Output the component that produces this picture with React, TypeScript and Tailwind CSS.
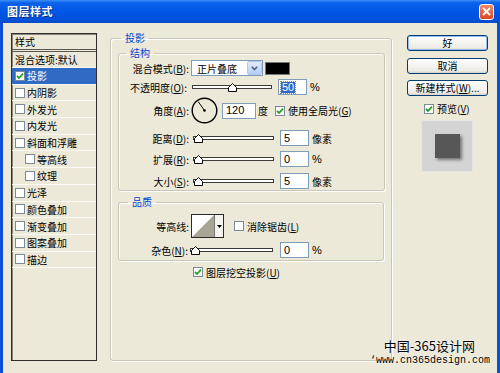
import React from "react"

const cjk = "font-['Noto_Sans_CJK_SC','Noto_Sans',sans-serif]"

function Check({ checked, className = "" }: { checked?: boolean; className?: string }) {
  return (
    <span
      className={`inline-flex w-[10px] h-[10px] shrink-0 items-center justify-center border border-[#7a8a99] bg-white ${className}`}
    >
      {checked && (
        <svg width="8" height="8" viewBox="0 0 8 8">
          <path d="M1 3.8 L3 6 L7 1.6" stroke="#21a121" strokeWidth="1.8" fill="none" />
        </svg>
      )}
    </span>
  )
}

function Slider({ width, thumb }: { width: number; thumb: number }) {
  return (
    <svg width={width} height="14" className="shrink-0">
      <rect x="0.5" y="5.5" width={width - 1} height="3" fill="#fff" stroke="#3a3a3a" />
      <path
        d={`M${thumb + 0.5} 3.5 L${thumb + 4.5} 7.5 L${thumb + 4.5} 11.5 L${thumb - 3.5} 11.5 L${thumb - 3.5} 7.5 Z`}
        fill="#fff"
        stroke="#000"
      />
    </svg>
  )
}

function Field({ value, w = 29, selected }: { value: string; w?: number; selected?: boolean }) {
  return (
    <div
      className="h-[16px] shrink-0 bg-white border border-[#7f9db9] flex items-center pl-[2px] text-[11px] font-['Liberation_Sans',sans-serif] leading-none"
      style={{ width: w }}
    >
      {selected ? (
        <span className="bg-[#316ac5] text-white px-[1px] outline-1 outline-dotted outline-[#888]">{value}</span>
      ) : (
        <span className="pl-[1px]">{value}</span>
      )}
    </div>
  )
}

function Label({ children, w = 72 }: { children: React.ReactNode; w?: number }) {
  return (
    <div className="shrink-0 text-right pr-[2px]" style={{ width: w }}>
      {children}
    </div>
  )
}

function Dial() {
  return (
    <svg width="27" height="27" viewBox="0 0 27 27" className="shrink-0">
      <circle cx="13.5" cy="13.5" r="12.3" fill="none" stroke="#000" strokeWidth="1.4" />
      <line x1="13.5" y1="13.5" x2="7.2" y2="4.6" stroke="#000" strokeWidth="1" />
      <circle cx="13.5" cy="13.5" r="1.3" fill="#000" />
    </svg>
  )
}

function Btn({ children, primary }: { children: React.ReactNode; primary?: boolean }) {
  return (
    <div
      className={`h-[16px] w-[81px] rounded-[3px] border border-[#003c74] bg-[linear-gradient(to_bottom,#ffffff,#ecebe6_85%,#d6d0c5)] flex items-center justify-center text-[10px] leading-none ${
        primary ? "shadow-[inset_0_0_0_1px_#9bbcf2]" : ""
      }`}
    >
      {children}
    </div>
  )
}

const items: { label: string; checked?: boolean; selected?: boolean; sub?: boolean }[] = [
  { label: "投影", checked: true, selected: true },
  { label: "内阴影" },
  { label: "外发光" },
  { label: "内发光" },
  { label: "斜面和浮雕" },
  { label: "等高线", sub: true },
  { label: "纹理", sub: true },
  { label: "光泽" },
  { label: "颜色叠加" },
  { label: "渐变叠加" },
  { label: "图案叠加" },
  { label: "描边" },
]

const groupBox =
  "border border-[#c9c6b6] rounded-[3px] shadow-[1px_1px_0_#fff,inset_1px_1px_0_#fff]"

export default function App() {
  return (
    <div className={`w-[500px] h-[373px] bg-[#ece9d8] flex flex-col overflow-hidden relative text-[10px] text-black ${cjk}`}>
      {/* title bar */}
      <div className="h-[23px] shrink-0 flex items-center justify-between pl-[7px] pr-[6px] bg-[linear-gradient(to_bottom,#3d8ff7_0%,#0a62ea_12%,#0055e5_55%,#0450d8_90%,#0a49c0_100%)]">
        <span className="text-white font-bold text-[11px] tracking-[0.5px] [text-shadow:1px_1px_0_#0a2f8a]">图层样式</span>
        <div className="w-[15px] h-[16px] rounded-[3px] border border-white bg-[linear-gradient(to_bottom,#f08a6a,#d9481f)] flex items-center justify-center">
          <svg width="9" height="9" viewBox="0 0 9 9">
            <path d="M1 1 L8 8 M8 1 L1 8" stroke="#fff" strokeWidth="1.8" />
          </svg>
        </div>
      </div>

      {/* body */}
      <div className="flex-1 flex items-start border-x-[3px] border-[#0b4fd6] pl-[8px] pt-[8px]">
        {/* style list */}
        <div className="w-[86px] h-[328px] mt-[2px] shrink-0 border border-[#2e2e2e] shadow-[inset_1px_1px_0_#8a887c]">
          <div className="h-[18px] flex items-center pl-[3px] border-b-[3px] border-double border-[#5a5850]">样式</div>
          <div className="h-[16px] flex items-center pl-[3px] border-b border-[#fbfaf4]">混合选项:默认</div>
          {items.map((it) => (
            <div
              key={it.label}
              className={`h-[16.7px] flex items-center gap-[2px] border-b border-[#fbfaf4] ${
                it.sub ? "pl-[13px]" : "pl-[3px]"
              } ${it.selected ? "bg-[#316ac5] text-white" : ""}`}
            >
              <Check checked={it.checked} />
              <span>{it.label}</span>
            </div>
          ))}
        </div>

        {/* settings */}
        <fieldset className={`ml-[13px] w-[282px] h-[330px] shrink-0 pl-[7px] pr-[6px] ${groupBox}`}>
          <legend className="ml-[3px] px-[4px] h-[14px] leading-[14px] text-[#0046d5]">投影</legend>

          <fieldset className={`mt-[1px] h-[145px] ${groupBox}`}>
            <legend className="ml-[7px] px-[4px] h-[14px] leading-[14px] text-[#0046d5]">结构</legend>

            <div className="flex items-center h-[16px]">
              <Label>
                混合模式(<u>B</u>):
              </Label>
              <div className="w-[72px] h-[16px] bg-white border border-[#7f9db9] flex items-center justify-between pl-[5px]">
                <span>正片叠底</span>
                <div className="w-[15px] h-[14px] rounded-[2px] bg-[linear-gradient(to_bottom,#e2ebfd,#b7cdf8)] border border-[#b1c7f2] flex items-center justify-center">
                  <svg width="7" height="5" viewBox="0 0 7 5">
                    <path d="M0.8 0.8 L3.5 3.6 L6.2 0.8" stroke="#4d6185" strokeWidth="1.6" fill="none" />
                  </svg>
                </div>
              </div>
              <div className="ml-[2px] w-[25px] h-[13px] bg-black border border-[#777]" />
            </div>

            <div className="flex items-center h-[16px] mt-[3px]">
              <Label w={70}>
                不透明度(<u>O</u>):
              </Label>
              <div className="ml-[3px]">
                <Slider width={80} thumb={40} />
              </div>
              <div className="ml-[6px]">
                <Field value="50" selected />
              </div>
              <span className="ml-[3px] font-['Liberation_Sans',sans-serif] text-[11px]">%</span>
            </div>

            <div className="flex items-center h-[27px] mt-[2px]">
              <Label>
                角度(<u>A</u>):
              </Label>
              <Dial />
              <div className="ml-[4px]">
                <Field value="120" w={34} />
              </div>
              <span className="ml-[2px]">度</span>
              <Check checked className="ml-[7px]" />
              <span className="ml-[3px]">
                使用全局光(<u>G</u>)
              </span>
            </div>

            {[
              { l: "距离", k: "D", v: "5", u: "像素", mt: "mt-[6px]" },
              { l: "扩展", k: "R", v: "0", u: "%", mt: "mt-[5px]" },
              { l: "大小", k: "S", v: "5", u: "像素", mt: "mt-[6px]" },
            ].map((r) => (
              <div key={r.l} className={`flex items-center h-[16px] ${r.mt}`}>
                <Label>
                  {r.l}(<u>{r.k}</u>):
                </Label>
                <div className="ml-[2px]">
                  <Slider width={81} thumb={5} />
                </div>
                <div className="ml-[6px]">
                  <Field value={r.v} />
                </div>
                <span className={`ml-[3px] ${r.u === "%" ? "font-['Liberation_Sans',sans-serif] text-[11px]" : ""}`}>{r.u}</span>
              </div>
            ))}
          </fieldset>

          <fieldset className={`mt-[4px] h-[66px] w-[266px] ${groupBox}`}>
            <legend className="ml-[9px] px-[4px] h-[14px] leading-[14px] text-[#0046d5]">品质</legend>

            <div className="flex items-center h-[24px] mt-[5px]">
              <Label>等高线:</Label>
              <div className="flex h-[24px] border border-[#2a2a2a]">
                <svg width="22" height="22" viewBox="0 0 22 22" className="bg-white">
                  <path d="M0 22 L22 0 L22 22 Z" fill="#a9a596" />
                </svg>
                <div className="w-[9px] border-l border-[#777] bg-[#f4f3ee] flex items-center justify-center">
                  <svg width="5" height="3" viewBox="0 0 5 3">
                    <path d="M0 0 H5 L2.5 3 Z" fill="#000" />
                  </svg>
                </div>
              </div>
              <Check className="ml-[10px]" />
              <span className="ml-[3px]">
                消除锯齿(<u>L</u>)
              </span>
            </div>

            <div className="flex items-center h-[16px] mt-[4px]">
              <Label w={71}>
                杂色(<u>N</u>):
              </Label>
              <Slider width={83} thumb={5} />
              <div className="ml-[7px]">
                <Field value="0" />
              </div>
              <span className="ml-[3px] font-['Liberation_Sans',sans-serif] text-[11px]">%</span>
            </div>
          </fieldset>

          <div className="flex items-center h-[12px] mt-[5px] pl-[75px]">
            <Check checked />
            <span className="ml-[3px]">
              图层挖空投影(<u>U</u>)
            </span>
          </div>
        </fieldset>

        {/* right column */}
        <div className="ml-[15px] mt-[4px] w-[81px] shrink-0 flex flex-col">
          <Btn primary>好</Btn>
          <div className="mt-[7px]">
            <Btn>取消</Btn>
          </div>
          <div className="mt-[6px]">
            <Btn>
              新建样式(<u>W</u>)...
            </Btn>
          </div>
          <div className="mt-[6px] h-[13px] flex items-center pl-[17px]">
            <Check checked />
            <span className="ml-[3px]">
              预览(<u>V</u>)
            </span>
          </div>
          <div className="mt-[5px] ml-[14px] w-[52px] h-[52px] bg-[#d4d4d4] border border-[#e4e4e4] flex items-center justify-center">
            <div className="w-[25px] h-[24px] bg-[#575757] shadow-[2px_2px_3px_rgba(0,0,0,0.45)]" />
          </div>
        </div>
      </div>

      {/* watermark */}
      <div className="absolute right-[10px] bottom-[7px] flex flex-col items-end">
        <span className="text-[13px] leading-[14px] text-black pr-[15px] [text-shadow:0_0_2px_#fff,0_0_2px_#fff]">中国-365设计网</span>
        <span className="mt-[2px] text-[10px] leading-[11px] font-['Liberation_Mono',monospace] text-black [text-shadow:0_0_2px_#fff]">‘www.cn365design.com</span>
      </div>
    </div>
  )
}
